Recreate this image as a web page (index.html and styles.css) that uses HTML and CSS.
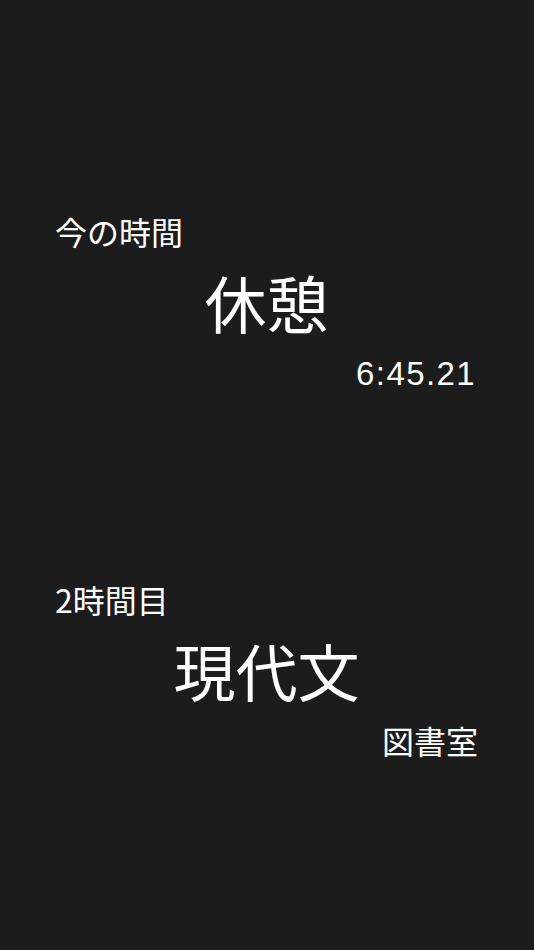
FILE: index.html
```html
<!DOCTYPE html>
<html lang="ja">
<head>
<meta charset="utf-8">
<link rel="stylesheet" href="styles.css">
</head>
<body>
<main class="screen">
  <section class="block block-now">
    <div class="label">今の時間</div>
    <div class="title">休憩</div>
    <div class="sub sub-time">6:45.21</div>
  </section>
  <section class="block block-next">
    <div class="label">2時間目</div>
    <div class="title">現代文</div>
    <div class="sub">図書室</div>
  </section>
</main>
</body>
</html>
```
FILE: styles.css
```css
html, body {
  margin: 0;
  padding: 0;
  background: #1c1c1c;
}
.screen {
  width: 534px;
  height: 950px;
  box-sizing: border-box;
  padding: 215px 56px 0 55px;
  display: flex;
  flex-direction: column;
  gap: 193px;
  color: #ffffff;
  font-family: "Noto Sans CJK JP", "Noto Sans", sans-serif;
}
.block {
  display: flex;
  flex-direction: column;
}
.label {
  font-size: 32px;
  line-height: 32px;
  height: 32px;
}
.title {
  font-size: 62px;
  line-height: 64px;
  height: 64px;
  margin-top: 23px;
  text-align: center;
}
.sub {
  font-size: 32px;
  line-height: 32px;
  margin-top: 22px;
  text-align: right;
}
.sub-time {
  font-family: "Liberation Sans", "Noto Sans", sans-serif;
  font-size: 33px;
  letter-spacing: 1.4px;
  margin-top: 24px;
  margin-right: 2px;
}
```
